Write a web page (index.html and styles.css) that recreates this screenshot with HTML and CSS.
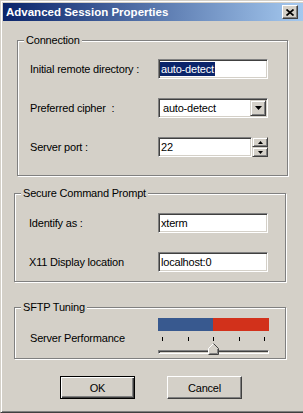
FILE: index.html
```html
<!DOCTYPE html>
<html lang="en">

<head>
  <meta charset="UTF-8" />
  <meta name="viewport" content="width=device-width, initial-scale=1.0" />
  <title>Advanced Session Properties</title>
  <link rel="stylesheet" href="styles.css">
</head>

<body>
  <div class="window">
    <div class="titlebar">
      <span class="title">Advanced Session Properties</span>
      <span class="close">
        <svg width="8" height="7" viewBox="0 0 8 7"><path d="M0.5 0.5L7.5 6.5M7.5 0.5L0.5 6.5" stroke="#000" stroke-width="1.7" /></svg>
      </span>
    </div>

    <div class="content">
      <div class="group connection">
        <span class="legend">Connection</span>
        <div class="row">
          <span class="label">Initial remote directory :</span>
          <div class="field highlight"><span class="selected">auto-detect</span></div>
        </div>
        <div class="row">
          <span class="label">Preferred cipher&nbsp; :</span>
          <div class="field select">
            <span class="value">auto-detect</span>
            <span class="drop-button">
              <svg width="7" height="4" viewBox="0 0 7 4"><path d="M0 0H7L3.5 4Z" fill="#000" /></svg>
            </span>
          </div>
        </div>
        <div class="row">
          <span class="label">Server port :</span>
          <div class="spin-field">
            <div class="field port"><span class="value">22</span></div>
            <div class="spin">
              <span class="spin-button">
                <svg width="5" height="3" viewBox="0 0 5 3"><path d="M2.5 0L5 3H0Z" fill="#000" /></svg>
              </span>
              <span class="spin-button">
                <svg width="5" height="3" viewBox="0 0 5 3"><path d="M0 0H5L2.5 3Z" fill="#000" /></svg>
              </span>
            </div>
          </div>
        </div>
      </div>

      <div class="group secure">
        <span class="legend">Secure Command Prompt</span>
        <div class="row">
          <span class="label">Identify as :</span>
          <div class="field"><span class="value">xterm</span></div>
        </div>
        <div class="row">
          <span class="label">X11 Display location</span>
          <div class="field"><span class="value">localhost:0</span></div>
        </div>
      </div>

      <div class="group sftp">
        <span class="legend">SFTP Tuning</span>
        <div class="row">
          <span class="label">Server Performance</span>
          <div class="slider">
            <div class="perf-bar">
              <span class="perf-low"></span>
              <span class="perf-high"></span>
            </div>
            <div class="ticks">
              <span></span><span></span><span></span><span></span><span></span>
            </div>
            <div class="track-area">
              <div class="track"></div>
              <svg class="thumb" width="11" height="12" viewBox="0 0 11 12">
                <path d="M0.5 11.5V5.5L5.5 0.5L10.5 5.5V11.5Z" fill="#d4d0c8" />
                <path d="M0.5 11V5.5L5.5 0.5" stroke="#fff" fill="none" />
                <path d="M5.5 0.5L10.5 5.5V11.5H0.5" stroke="#404040" fill="none" />
                <path d="M9.5 6V10.5H1.5" stroke="#808080" fill="none" />
              </svg>
            </div>
          </div>
        </div>
      </div>

      <div class="buttons">
        <button class="default">OK</button>
        <button>Cancel</button>
      </div>
    </div>
  </div>
</body>

</html>
```

FILE: styles.css
```css
body {
  margin: 0;
  background: #d4d0c8;
  overflow: hidden;
  font-family: "Liberation Sans", Arial, sans-serif;
  font-size: 11px;
  letter-spacing: -0.2px;
  color: #000;
}

/* Classic raised window frame, right edge runs past the viewport */
.window {
  width: 308px;
  height: 413px;
  box-sizing: border-box;
  border: 1px solid;
  border-color: #d4d0c8 #404040 #404040 #d4d0c8;
  box-shadow: inset 1px 1px #fff, inset -1px -1px #808080;
  padding: 2px;
  background: #d4d0c8;
}

.titlebar {
  height: 18px;
  background: linear-gradient(to right, #0a246a, #a6caf0);
  display: flex;
  align-items: center;
  justify-content: space-between;
  padding: 0 7px 0 3px;
}

.title {
  color: #fff;
  font-weight: bold;
  font-size: 11.5px;
  letter-spacing: 0;
}

.close {
  width: 16px;
  height: 14px;
  box-sizing: border-box;
  background: #d4d0c8;
  border: 1px solid;
  border-color: #fff #404040 #404040 #fff;
  box-shadow: inset -1px -1px #808080;
  display: flex;
  align-items: center;
  justify-content: center;
}

.close svg {
  display: block;
}

.content {
  padding: 19px 0 0 11px;
}

/* Etched group box */
.group {
  position: relative;
  box-sizing: border-box;
  border: 1px solid #808080;
  box-shadow: 1px 1px 0 #fff, inset 1px 1px 0 #fff;
  display: flex;
  flex-direction: column;
}

.legend {
  position: absolute;
  top: -7px;
  left: 6px;
  padding: 0 2px;
  line-height: 13px;
  background: #d4d0c8;
}

.connection {
  margin-left: 3px;
  width: 271px;
  height: 136px;
  padding: 18px 0 0 12px;
  gap: 19px;
}

.connection .label {
  width: 128px;
}

.secure {
  margin-top: 17px;
  width: 272px;
  height: 89px;
  padding: 19px 0 0 14px;
  gap: 19px;
}

.secure .label {
  width: 129px;
}

.sftp {
  margin-top: 25px;
  width: 272px;
  height: 52px;
  padding: 10px 0 0 15px;
}

.sftp .label {
  width: 128px;
  margin-top: 3px;
}

.row {
  display: flex;
  align-items: center;
}

/* Sunken edit box */
.field {
  width: 110px;
  height: 20px;
  box-sizing: border-box;
  background: #fff;
  border: 1px solid;
  border-color: #808080 #fff #fff #808080;
  box-shadow: inset 1px 1px #404040, inset -1px -1px #d4d0c8;
  display: flex;
  align-items: center;
  padding: 1px 1px 1px 2px;
}

.field.highlight {
  padding-left: 1px;
}

.selected {
  background: #0a246a;
  color: #fff;
  line-height: 14px;
  padding: 0 1px;
}

.value {
  line-height: 14px;
}

.select .value {
  padding-left: 2px;
}

.drop-button {
  margin-left: auto;
  width: 16px;
  height: 16px;
  box-sizing: border-box;
  background: #d4d0c8;
  border: 1px solid;
  border-color: #d4d0c8 #404040 #404040 #d4d0c8;
  box-shadow: inset 1px 1px #fff, inset -1px -1px #808080;
  display: flex;
  align-items: center;
  justify-content: center;
}

.drop-button svg,
.spin-button svg {
  display: block;
}

.spin-field {
  display: flex;
  width: 110px;
}

.field.port {
  width: 94px;
}

.spin {
  display: flex;
  flex-direction: column;
}

.spin-button {
  width: 16px;
  height: 10px;
  box-sizing: border-box;
  background: #d4d0c8;
  border: 1px solid;
  border-color: #d4d0c8 #404040 #404040 #d4d0c8;
  box-shadow: inset 1px 1px #fff, inset -1px -1px #808080;
  display: flex;
  align-items: center;
  justify-content: center;
}

/* Performance slider */
.slider {
  width: 111px;
}

.perf-bar {
  display: flex;
  height: 13px;
}

.perf-low {
  width: 55px;
  background: #38598f;
}

.perf-high {
  flex: 1;
  background: #d2311b;
}

.ticks {
  display: flex;
  justify-content: space-between;
  padding: 0 4px;
  margin-top: 6px;
  height: 4px;
}

.ticks span {
  width: 1px;
  background: #000;
}

.track-area {
  position: relative;
  height: 13px;
}

.track {
  position: relative;
  top: 9px;
  height: 4px;
  box-sizing: border-box;
  border: 1px solid;
  border-color: #808080 #fff #fff #808080;
  box-shadow: inset 1px 1px #404040;
}

.thumb {
  position: absolute;
  left: 50px;
  top: 2px;
}

.buttons {
  display: flex;
  gap: 32px;
  margin: 17px 0 0 46px;
}

button {
  width: 75px;
  height: 23px;
  box-sizing: border-box;
  background: #d4d0c8;
  border: 1px solid;
  border-color: #fff #404040 #404040 #fff;
  box-shadow: inset -1px -1px #808080;
  font-family: "Liberation Sans", Arial, sans-serif;
  font-size: 11px;
  letter-spacing: -0.2px;
  color: #000;
  padding: 0;
}

button.default {
  border-color: #000;
  box-shadow: inset 1px 1px #fff, inset -1px -1px #404040, inset -2px -2px #808080;
}
```
